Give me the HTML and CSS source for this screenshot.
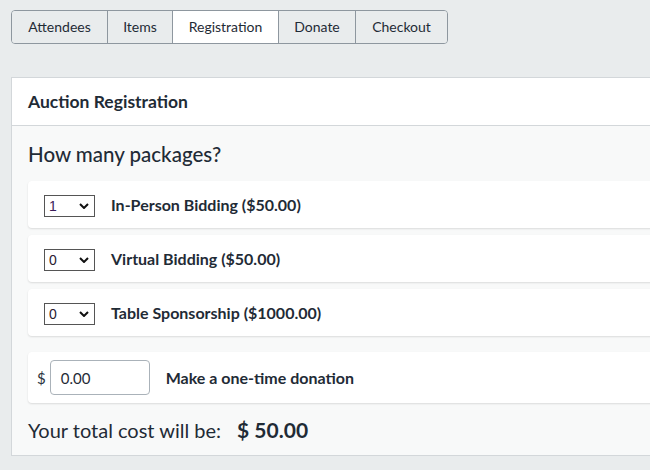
FILE: index.html
```html
<!DOCTYPE html>
<html>
<head>
<meta charset="utf-8">
<link rel="stylesheet" href="styles.css">
</head>
<body>
<nav class="tabs">
  <a class="tab">Attendees</a>
  <a class="tab">Items</a>
  <a class="tab active">Registration</a>
  <a class="tab">Donate</a>
  <a class="tab">Checkout</a>
</nav>
<section class="panel">
  <header class="panel-head">Auction Registration</header>
  <div class="panel-body">
    <h2 class="question">How many packages?</h2>
    <div class="card">
      <div class="select"><span class="sel-val v1">1</span><svg class="chev" viewBox="0 0 10 6"><path d="M1 1 L5 5 L9 1" fill="none" stroke="#111" stroke-width="2"/></svg></div>
      <span class="label">In-Person Bidding ($50.00)</span>
    </div>
    <div class="card">
      <div class="select"><span class="sel-val">0</span><svg class="chev" viewBox="0 0 10 6"><path d="M1 1 L5 5 L9 1" fill="none" stroke="#111" stroke-width="2"/></svg></div>
      <span class="label">Virtual Bidding ($50.00)</span>
    </div>
    <div class="card">
      <div class="select"><span class="sel-val">0</span><svg class="chev" viewBox="0 0 10 6"><path d="M1 1 L5 5 L9 1" fill="none" stroke="#111" stroke-width="2"/></svg></div>
      <span class="label">Table Sponsorship ($1000.00)</span>
    </div>
    <div class="card donation">
      <span class="dollar">$</span>
      <div class="input">0.00</div>
      <span class="label">Make a one-time donation</span>
    </div>
    <div class="total"><span>Your total cost will be:</span><span class="amount">$ 50.00</span></div>
  </div>
</section>
</body>
</html>
```

FILE: styles.css
```css
html, body {
  margin: 0;
  padding: 0;
  background: #e9eced;
  font-family: Lato, "Open Sans", sans-serif;
  color: #1f2b36;
  overflow: hidden;
}

.tabs {
  display: inline-flex;
  margin: 10px 0 0 11px;
  border: 1px solid #8e979f;
  border-radius: 4px;
  overflow: hidden;
  height: 32px;
}

.tab {
  display: flex;
  align-items: center;
  justify-content: center;
  font-size: 14px;
  color: #1f2b36;
  border-left: 1px solid #8e979f;
  background: #e9eced;
  padding-bottom: 2px;
  box-sizing: border-box;
}
.tab:first-child { border-left: none; width: 95px; }
.tab:nth-child(2) { width: 65px; }
.tab:nth-child(3) { width: 106px; }
.tab:nth-child(4) { width: 77px; }
.tab:nth-child(5) { width: 92px; }
.tab.active { background: #fff; }

.panel {
  margin: 33px 0 0 11px;
  width: 700px;
  border: 1px solid #d3d7da;
  background: #f8f9f9;
}

.panel-head {
  height: 47px;
  background: #fff;
  border-bottom: 1px solid #d3d7da;
  display: flex;
  align-items: center;
  padding-left: 16px;
  font-size: 17.5px;
  font-weight: 700;
}

.panel-body {
  padding: 15px 16px 12px 16px;
}

.question {
  margin: 0 0 14px 0;
  font-size: 20.5px;
  font-weight: 500;
  line-height: 26px;
}

.card {
  display: flex;
  align-items: center;
  background: #fff;
  border-radius: 4px;
  box-shadow: 0 1px 2px rgba(0,0,0,0.12);
  height: 47px;
  padding-left: 16px;
  margin-bottom: 7px;
}

.select {
  height: 20px;
  border: 1px solid #555;
  display: flex;
  align-items: center;
  justify-content: space-between;
  padding: 0 5px 0 4px;
  box-sizing: content-box;
  margin-top: 3px;
  margin-right: 16px;
  width: 40px;
}
.sel-val {
  font-size: 14px;
  color: #2a2030;
  font-family: "Liberation Sans", Arial, sans-serif;
}
.sel-val.v1 { color: #3c1b5a; }
.chev { width: 10px; height: 6px; }

.label {
  font-size: 16px;
  font-weight: 700;
  color: #1f2b36;
}

.donation {
  margin-top: 16px;
  height: 51px;
  padding-left: 9px;
  margin-bottom: 14px;
}
.dollar {
  font-size: 15px;
  color: #2a3540;
  margin-right: 4px;
}
.input {
  width: 88px;
  height: 33px;
  border: 1px solid #aab2b9;
  border-radius: 4px;
  display: flex;
  align-items: center;
  padding-left: 10px;
  font-size: 15px;
  margin-right: 16px;
}

.total {
  display: flex;
  gap: 16px;
  font-size: 20px;
  line-height: 26px;
}
.amount { font-weight: 700; font-size: 21px; }
```
